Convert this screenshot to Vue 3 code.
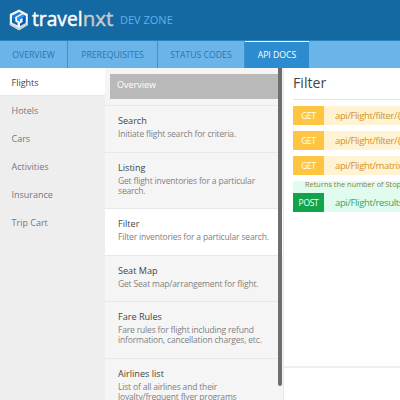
<script setup>
const tabs = [
  { label: 'OVERVIEW', cls: 't1' },
  { label: 'PREREQUISITES', cls: 't2' },
  { label: 'STATUS CODES', cls: 't3' },
  { label: 'API DOCS', cls: 't4 active' },
]
const products = ['Flights', 'Hotels', 'Cars', 'Activities', 'Insurance', 'Trip Cart']
const topics = [
  { title: 'Search', lines: ['Initiate flight search for criteria.'] },
  { title: 'Listing', lines: ['Get flight inventories for a particular', 'search.'] },
  { title: 'Filter', lines: ['Filter inventories for a particular search.'], active: true },
  { title: 'Seat Map', lines: ['Get Seat map/arrangement for flight.'] },
  { title: 'Fare Rules', lines: ['Fare rules for flight including refund', 'information, cancellation charges, etc.'] },
  { title: 'Airlines list', lines: ['List of all airlines and their', 'loyalty/frequent flyer programs'] },
]
const gets = ['api/Flight/filter/{sessionId}', 'api/Flight/filter/{sessionId}', 'api/Flight/matrix/{sessionId}']
</script>

<template>
  <div class="page">
    <header class="header">
      <svg class="mark" width="20" height="22" viewBox="0 0 20 22">
        <polygon points="10,0.4 18.8,5 18.8,16 10,21.2 0.8,16 0.8,5" fill="#f2f7fa" />
        <polygon points="0.8,14 10,18.6 18.8,13.5 18.8,16 10,21.2 0.8,16" fill="#c9d3d6" />
        <polygon points="3,6.6 10,3 12.6,4.3 6.2,7.9 6.2,12.6 3,11" fill="#1b7fd8" />
        <polygon points="3,9 6.2,10.5 6.2,12.6 8.6,13.8 8.6,16.6 3,13.7" fill="#1469a2" />
        <polygon points="8.4,8.6 14,5.5 16.8,7 16.8,14 11,17.3 11,14.4 13.6,12.9 13.6,9 11,10.3 11,12.6 8.4,11.4" fill="#0b57bd" />
        <polygon points="8.4,8.6 14,5.5 16.4,6.8 11,9.9 11,12.6 8.4,11.4" fill="#2595f5" />
      </svg>
      <svg class="word" width="86" height="34" viewBox="0 0 86 34">
        <text x="1" y="22" textLength="50.5" lengthAdjust="spacingAndGlyphs" class="white">travel</text>
        <text x="51.8" y="22" textLength="30.6" lengthAdjust="spacingAndGlyphs" class="grey">nxt</text>
      </svg>
      <span class="zone">DEV ZONE</span>
    </header>
    <nav class="nav">
      <a v-for="t in tabs" :key="t.label" class="tab" :class="t.cls">{{ t.label }}</a>
    </nav>
    <div class="body">
      <aside class="side">
        <a v-for="(p, i) in products" :key="p" class="product" :class="{ active: i === 0 }">{{ p }}</a>
      </aside>
      <section class="topics">
        <div class="list">
          <div class="overview-wrap"><div class="overview">Overview</div></div>
          <div v-for="t in topics" :key="t.title" class="topic" :class="{ active: t.active, tall: t.lines.length > 1 }">
            <div class="title">{{ t.title }}</div>
            <div v-for="l in t.lines" :key="l" class="desc">{{ l }}</div>
          </div>
        </div>
        <div class="scroll"></div>
      </section>
      <main class="main">
        <div class="card">
          <h1>Filter</h1>
          <div v-for="(g, i) in gets" :key="i" class="row get">
            <span class="verb">GET</span><span class="path">{{ g }}</span>
          </div>
          <div class="note">Returns the number of Stops and</div>
          <div class="row post">
            <span class="verb">POST</span><span class="path">api/Flight/results/{sessionId}</span>
          </div>
        </div>
      </main>
    </div>
  </div>
</template>

<style>
body { overflow: hidden; }
</style>

<style scoped>
* { box-sizing: border-box; }
.page { width: 400px; height: 400px; overflow: hidden; background: #fff; font-family: "Open Sans", "Noto Sans", sans-serif; display: flex; flex-direction: column; white-space: nowrap; }
.header { height: 41px; flex: none; background: #1469a2; border-bottom: 1px solid #2b83bf; display: flex; padding-left: 9px; }
.mark { margin-top: 9px; flex: none; }
.word { margin: 4px 0 0 2px; flex: none; }
.word text { font: 400 20px "Open Sans", sans-serif; stroke-width: .45px; }
.white { fill: #fff; stroke: #fff; }
.grey { fill: #c5c9cc; stroke: #c5c9cc; }
.zone { margin: 12px 0 0 3px; font-size: 11px; line-height: 16px; color: #5fb1ea; }
.nav { height: 27px; flex: none; background: #6ab4ea; display: flex; }
.tab { flex: none; height: 27px; line-height: 29px; text-align: center; font-size: 8.7px; color: #2976ae; border-right: 1px solid #3c92cf; }
.t1 { width: 68px; }
.t2 { width: 90px; }
.t3 { width: 87px; }
.t4 { width: 64px; }
.tab.active { background: #2d8ccf; color: #fff; border-right: 0; border-top: 1px solid #fff; line-height: 27px; }
.body { flex: 1; display: flex; min-height: 0; }
.side { width: 105px; flex: none; background: #eee; display: flex; flex-direction: column; }
.product { height: 28px; line-height: 29px; padding-left: 11.5px; font-size: 9px; color: #777; }
.product.active { background: #fff; color: #444; border-bottom: 1px solid #e8e8e8; }
.topics { width: 179px; flex: none; background: #f5f5f5; position: relative; border-right: 1px solid #e9e9e9; overflow: hidden; }
.list { display: flex; flex-direction: column; }
.overview-wrap { height: 37px; padding: 6px 0 0 5px; flex: none; }
.overview { width: 169px; height: 25px; background: #b9b9b9; color: #fff; font-size: 9px; line-height: 22px; padding-left: 7px; }
.topic { height: 46.5px; flex: none; border-top: 1px solid #e8e8e8; padding: 9px 0 0 13px; }
.topic.tall { height: 56.7px; }
.topic.active { background: #fff; }
.title { font-size: 9.1px; line-height: 12px; color: #444; margin-bottom: 2px; }
.desc { font-size: 8.5px; letter-spacing: -0.17px; line-height: 10px; color: #828282; }
.scroll { position: absolute; left: 173px; top: 0; width: 4px; height: 318px; background: #6e6e6e; border-radius: 0 0 2px 2px; }
.main { flex: 1; min-width: 0; overflow: hidden; }
.card { height: 300px; border-bottom: 2px solid #eee; padding-left: 9px; }
h1 { margin: 0 0 6px; height: 32px; border-bottom: 1px solid #e6e6e6; font-size: 14.2px; font-weight: 400; line-height: 30px; color: #444; }
.row { display: flex; height: 19px; line-height: 19px; margin-bottom: 6px; font-size: 9px; }
.verb { width: 31px; flex: none; text-align: center; color: #fff; font-size: 8.5px; letter-spacing: -0.3px; }
.path { padding-left: 11px; font-size: 9.5px; letter-spacing: -0.36px; }
.get { background: #fff3d4; color: #d19328; }
.get .verb { background: #ffc542; }
.note { height: 12px; background: #e0fcee; padding-left: 12px; font-size: 7.4px; line-height: 7px; color: #8a7c42; }
.post { background: #e0fcee; color: #35a35f; }
.post .verb { background: #12a44b; }
</style>
